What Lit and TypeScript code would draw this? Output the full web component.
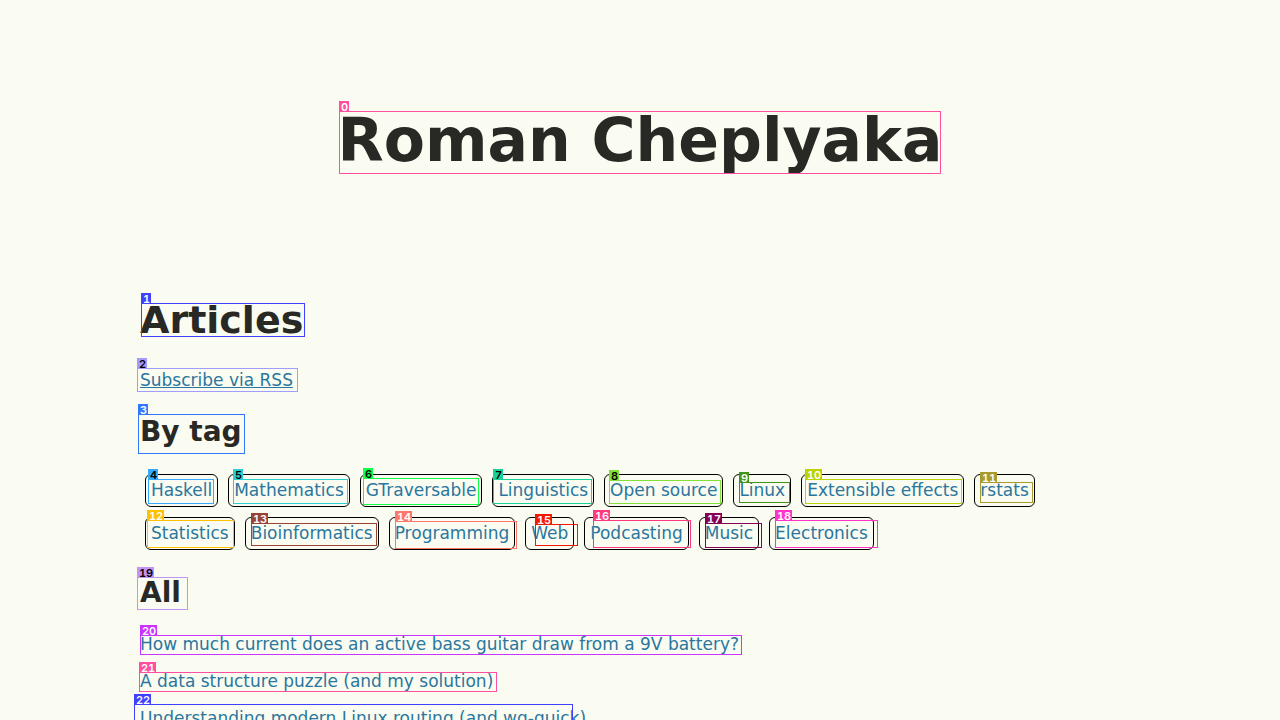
import { LitElement, html, css } from "lit";
import { customElement, property } from "lit/decorators.js";
import { styleMap } from "lit/directives/style-map.js";

interface Mark {
  x: number;
  y: number;
  w: number;
  h: number;
  color: string;
  dark?: boolean;
}

// Origin: top left corner of the content column.
const MARKS: Mark[] = [
  { x: 199, y: 111, w: 602, h: 63, color: "#ff4fa0" },
  { x: 1, y: 303, w: 164, h: 34, color: "#4040ff" },
  { x: -3, y: 368, w: 161, h: 24, color: "#a39cff", dark: true },
  { x: -2, y: 414, w: 107, h: 40, color: "#3377ff" },
  { x: 8, y: 479, w: 66, h: 25, color: "#33aaff", dark: true },
  { x: 93, y: 479, w: 115, h: 25, color: "#2ccfcf", dark: true },
  { x: 223, y: 478, w: 116, h: 27, color: "#11ff44", dark: true },
  { x: 353, y: 479, w: 99, h: 25, color: "#18d199", dark: true },
  { x: 469, y: 480, w: 112, h: 24, color: "#80e033", dark: true },
  { x: 599, y: 482, w: 51, h: 21, color: "#409519" },
  { x: 665, y: 479, w: 157, h: 25, color: "#bbd400" },
  { x: 840, y: 482, w: 53, h: 21, color: "#a89a2d" },
  { x: 7, y: 520, w: 87, h: 28, color: "#ffc000" },
  { x: 111, y: 523, w: 126, h: 23, color: "#994433" },
  { x: 255, y: 521, w: 122, h: 28, color: "#ff7766" },
  { x: 395, y: 524, w: 43, h: 22, color: "#f51800" },
  { x: 453, y: 520, w: 98, h: 28, color: "#ff3880" },
  { x: 565, y: 523, w: 57, h: 25, color: "#880055" },
  { x: 635, y: 520, w: 103, h: 28, color: "#ff33cc" },
  { x: -3, y: 577, w: 51, h: 33, color: "#c494f5", dark: true },
  { x: 0, y: 635, w: 602, h: 20, color: "#cc33ff" },
  { x: -1, y: 672, w: 358, h: 20, color: "#ff4fa0" },
  { x: -6, y: 704, w: 439, h: 24, color: "#4040ff" },
];

const TAGS = [
  "Haskell", "Mathematics", "GTraversable", "Linguistics", "Open source",
  "Linux", "Extensible effects", "rstats", "Statistics", "Bioinformatics",
  "Programming", "Web", "Podcasting", "Music", "Electronics",
];

const ARTICLES = [
  "How much current does an active bass guitar draw from a 9V battery?",
  "A data structure puzzle (and my solution)",
  "Understanding modern Linux routing (and wg-quick)",
];

@customElement("mark-layer")
export class MarkLayer extends LitElement {
  @property({ attribute: false }) marks: Mark[] = [];

  static styles = css`
    :host {
      position: absolute;
      inset: 0;
      pointer-events: none;
    }
    .mark {
      position: absolute;
      box-sizing: border-box;
      border: 1px solid var(--mark);
    }
    .label {
      position: absolute;
      left: -1px;
      bottom: 100%;
      padding: 0 1px 0 2px;
      height: 11px;
      background: var(--mark);
      color: #fff;
      font: 600 11px/12px Inter, "Liberation Sans", sans-serif;
      font-variant-numeric: tabular-nums;
    }
    .dark {
      color: #000;
    }
  `;

  render() {
    return this.marks.map(
      (m, i) => html`<div
        class="mark"
        style=${styleMap({
          left: `${m.x}px`,
          top: `${m.y}px`,
          width: `${m.w}px`,
          height: `${m.h}px`,
          "--mark": m.color,
        })}
      ><span class="label ${m.dark ? "dark" : ""}">${i}</span></div>`
    );
  }
}

@customElement("app-root")
export class AppRoot extends LitElement {
  static styles = css`
    :host {
      display: block;
      min-height: 100vh;
      background: #fafcf1;
      color: #282825;
      font: 17px/21px "DejaVu Sans", Verdana, sans-serif;
    }
    .page {
      position: relative;
      max-width: 1000px;
      margin: 0 auto;
      display: flow-root;
    }
    h1, h2, h3, p, ul {
      margin: 0;
      padding: 0;
    }
    h1 {
      margin: 110px 0 131px;
      text-align: center;
      font-size: 60px;
      line-height: 60px;
    }
    h2 {
      margin-bottom: 31px;
      font-size: 38px;
      line-height: 38px;
    }
    h3 {
      margin: 27px 0;
      font-size: 28px;
      line-height: 28px;
    }
    ul {
      list-style: none;
    }
    a {
      color: #2a769e;
      text-decoration: none;
    }
    .feed {
      text-decoration: underline;
    }
    .tags {
      display: flex;
      flex-wrap: wrap;
      gap: 10px;
      padding: 1px 40px 2px 5px;
    }
    .tag {
      padding: 5px;
      border: 1px solid #000;
      border-radius: 6px;
    }
    .articles {
      display: flex;
      flex-direction: column;
      gap: 16px;
    }
  `;

  render() {
    return html`
      <main class="page">
        <h1>Roman Cheplyaka</h1>
        <h2>Articles</h2>
        <p><a class="feed" href="#rss">Subscribe via RSS</a></p>
        <h3>By tag</h3>
        <ul class="tags">
          ${TAGS.map((t) => html`<li class="tag"><a href="#tag">${t}</a></li>`)}
        </ul>
        <h3>All</h3>
        <ul class="articles">
          ${ARTICLES.map((t) => html`<li><a href="#article">${t}</a></li>`)}
        </ul>
        <mark-layer .marks=${MARKS}></mark-layer>
      </main>
    `;
  }
}
